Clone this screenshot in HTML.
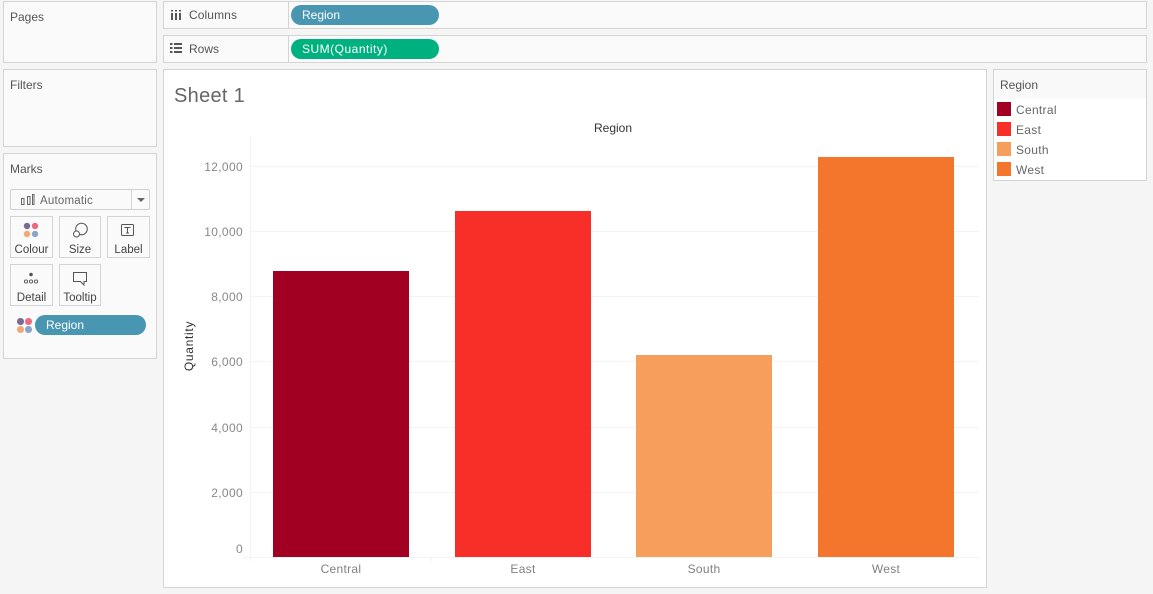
<!DOCTYPE html>
<html><head><meta charset="utf-8"><style>
html,body{margin:0;padding:0}
body{width:1153px;height:594px;background:#f5f5f5;position:relative;overflow:hidden;font-family:"Liberation Sans",sans-serif;color:#555}
.a,.t,.p{position:absolute}
.a{box-sizing:border-box}
.b{background:#fafafa;border:1px solid #d4d4d4}
.t{white-space:nowrap;line-height:16px;font-size:12px}
.p{box-sizing:border-box;color:#fff;font-size:12px;line-height:20px;border-radius:10px;height:20px;padding-left:11px;white-space:nowrap}
.c{position:absolute;box-sizing:border-box;background:#fafafa;border:1px solid #d4d4d4;width:42px;height:42px;text-align:center;font-size:11.5px;color:#444}
.c span{position:absolute;left:0;right:0;top:26px;line-height:14px}
.c svg{position:absolute;left:0;top:0}
.y{position:absolute;right:910px;font-size:12px;line-height:14px;color:#888;white-space:nowrap;letter-spacing:.35px}
.x{position:absolute;width:136px;text-align:center;top:562px;font-size:12px;line-height:14px;color:#808080;letter-spacing:.3px}
.g{position:absolute;left:243px;width:736px;height:1px;background:#f3f3f3}
.bar{position:absolute;width:136px}
.d{position:absolute;border-radius:50%;width:6.5px;height:6.5px}
</style></head><body>

<div class="a b" style="left:3px;top:1px;width:154px;height:62px"></div>
<div class="t" style="left:10px;top:9px;color:#555">Pages</div>
<div class="a b" style="left:3px;top:69px;width:154px;height:78px"></div>
<div class="t" style="left:10px;top:77px;color:#555">Filters</div>
<div class="a b" style="left:3px;top:153px;width:154px;height:206px"></div>
<div class="t" style="left:10px;top:161px;color:#555">Marks</div>

<div class="a" style="left:10px;top:189px;width:140px;height:21px;background:#fafafa;border:1px solid #d0d0d0;border-radius:2px"></div>
<div class="a" style="left:131px;top:190px;width:1px;height:19px;background:#d4d4d4"></div>
<svg class="a" style="left:0;top:186px" width="160" height="24"><g fill="none" stroke="#666" stroke-width="1"><rect x="21.5" y="12.5" width="2.5" height="6"/><rect x="27.5" y="10.5" width="2.5" height="8"/><rect x="32.5" y="8.5" width="1.5" height="10"/></g><path d="M137 12h8l-4 4z" fill="#666"/></svg>
<div class="t" style="left:40px;top:193px;font-size:11.5px;color:#666;letter-spacing:.2px">Automatic</div>

<div class="c" style="left:10px;top:216px;width:43px"><svg width="41" height="40"><circle cx="16" cy="9" r="3.2" fill="#7b6a94"/><circle cx="24" cy="9" r="3.2" fill="#ec6a7d"/><circle cx="16" cy="17" r="3.2" fill="#f3a877"/><circle cx="24" cy="17" r="3.2" fill="#86a6cc"/></svg><span>Colour</span></div>
<div class="c" style="left:59px;top:216px"><svg width="40" height="40" fill="#fafafa" stroke="#555"><circle cx="21.5" cy="12" r="5.8"/><circle cx="16.5" cy="17" r="3"/></svg><span>Size</span></div>
<div class="c" style="left:107px;top:216px;width:43px"><svg width="41" height="40" fill="none" stroke="#555"><rect x="13.5" y="7.5" width="12" height="11" rx="1"/><path d="M16.5 10.5h6M19.5 10.5v5.5M18 16h3"/></svg><span>Label</span></div>
<div class="c" style="left:10px;top:264px;width:43px"><svg width="41" height="40" fill="none" stroke="#555" stroke-width=".9"><circle cx="20" cy="9.5" r="1.8" fill="#555" stroke="none"/><circle cx="15" cy="16.5" r="1.6"/><circle cx="20" cy="16.5" r="1.6"/><circle cx="25" cy="16.5" r="1.6"/></svg><span>Detail</span></div>
<div class="c" style="left:59px;top:264px"><svg width="40" height="40" fill="none" stroke="#555"><path d="M13.5 7.5h13v9h-2.5v3.5l-3.5-3.5h-7z"/></svg><span>Tooltip</span></div>

<div class="d" style="left:17px;top:318px;background:#7b6a94"></div>
<div class="d" style="left:25px;top:318px;background:#ec6a7d"></div>
<div class="d" style="left:17px;top:326px;background:#f3a877"></div>
<div class="d" style="left:25px;top:326px;background:#86a6cc"></div>
<div class="p" style="left:35px;top:315px;width:111px;background:#4996b2">Region</div>

<div class="a b" style="left:163px;top:1px;width:984px;height:28px"></div>
<div class="a" style="left:288px;top:2px;width:1px;height:26px;background:#d4d4d4"></div>
<svg class="a" style="left:165px;top:2px" width="20" height="24" fill="#555"><rect x="6" y="8" width="2" height="1.5"/><rect x="6" y="11" width="2" height="7"/><rect x="10" y="8" width="2" height="1.5"/><rect x="10" y="11" width="2" height="7"/><rect x="14" y="8" width="2" height="1.5"/><rect x="14" y="11" width="2" height="7"/></svg>
<div class="t" style="left:189px;top:7px;color:#555;letter-spacing:.1px">Columns</div>
<div class="p" style="left:291px;top:5px;width:148px;background:#4996b2">Region</div>

<div class="a b" style="left:163px;top:35px;width:984px;height:28px"></div>
<div class="a" style="left:288px;top:36px;width:1px;height:26px;background:#d4d4d4"></div>
<svg class="a" style="left:168px;top:40px" width="16" height="16" fill="#555"><rect x="2" y="3" width="2.5" height="2"/><rect x="6" y="3" width="8" height="2"/><rect x="2" y="7" width="2.5" height="2"/><rect x="6" y="7" width="8" height="2"/><rect x="2" y="11" width="2.5" height="2"/><rect x="6" y="11" width="8" height="2"/></svg>
<div class="t" style="left:189px;top:41px;color:#555">Rows</div>
<div class="p" style="left:291px;top:39px;width:148px;background:#00b180;letter-spacing:.5px">SUM(Quantity)</div>

<div class="a" style="left:163px;top:69px;width:824px;height:519px;background:#fff;border:1px solid #d4d4d4"></div>
<div class="t" style="left:174px;top:84px;font-size:20px;line-height:24px;color:#666;letter-spacing:.3px">Sheet 1</div>
<div class="t" style="left:594px;top:120px;font-size:12px;color:#333">Region</div>

<div class="a" style="left:250px;top:137px;width:1px;height:424px;background:#f3f3f3"></div>
<div class="a" style="left:431px;top:557px;width:1px;height:4px;background:#f0f0f0"></div>
<div class="g" style="top:166px;left:250px;width:729px"></div>
<div class="g" style="top:231px;left:250px;width:729px"></div>
<div class="g" style="top:296px;left:250px;width:729px"></div>
<div class="g" style="top:361px;left:250px;width:729px"></div>
<div class="g" style="top:427px;left:250px;width:729px"></div>
<div class="g" style="top:492px;left:250px;width:729px"></div>
<div class="g" style="top:557px"></div>

<div class="bar" style="left:273px;top:271px;height:286px;background:#a10022"></div>
<div class="bar" style="left:455px;top:211px;height:346px;background:#f82f28"></div>
<div class="bar" style="left:636px;top:355px;height:202px;background:#f69f5c"></div>
<div class="bar" style="left:818px;top:157px;height:400px;background:#f4752c"></div>

<div class="y" style="top:160px">12,000</div>
<div class="y" style="top:225px">10,000</div>
<div class="y" style="top:290px">8,000</div>
<div class="y" style="top:355px">6,000</div>
<div class="y" style="top:421px">4,000</div>
<div class="y" style="top:486px">2,000</div>
<div class="y" style="top:542px">0</div>

<div class="t" style="left:189px;top:345.5px;font-size:12px;color:#333;letter-spacing:.7px;transform:translate(-50%,-50%) rotate(-90deg)">Quantity</div>

<div class="x" style="left:273px">Central</div>
<div class="x" style="left:455px">East</div>
<div class="x" style="left:636px">South</div>
<div class="x" style="left:818px">West</div>

<div class="a" style="left:993px;top:69px;width:154px;height:112px;background:#fff;border:1px solid #d4d4d4"></div>
<div class="a" style="left:994px;top:70px;width:152px;height:29px;background:#f9f9f9"></div>
<div class="t" style="left:1000px;top:77px;color:#555">Region</div>
<div class="a" style="left:997px;top:102px;width:14px;height:14px;background:#a10022"></div>
<div class="a" style="left:997px;top:122px;width:14px;height:14px;background:#f82f28"></div>
<div class="a" style="left:997px;top:142px;width:14px;height:14px;background:#f69f5c"></div>
<div class="a" style="left:997px;top:162px;width:14px;height:14px;background:#f4752c"></div>
<div class="t" style="left:1016px;top:102px;color:#666;letter-spacing:.3px">Central</div>
<div class="t" style="left:1016px;top:122px;color:#666;letter-spacing:.3px">East</div>
<div class="t" style="left:1016px;top:142px;color:#666;letter-spacing:.3px">South</div>
<div class="t" style="left:1016px;top:162px;color:#666;letter-spacing:.3px">West</div>
</body></html>
